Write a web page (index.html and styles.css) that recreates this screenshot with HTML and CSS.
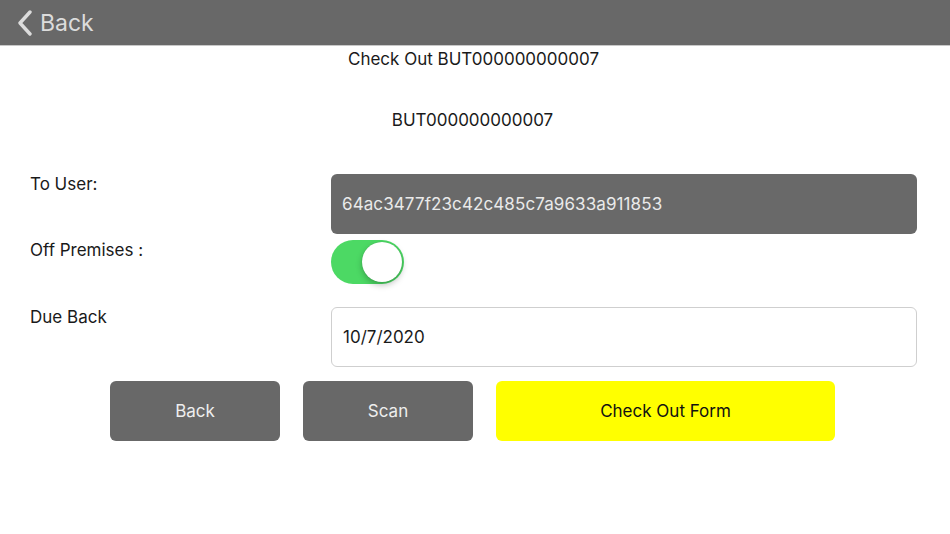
FILE: index.html
```html
<!DOCTYPE html>
<html lang="en">
<head>
    <meta charset="UTF-8">
    <meta name="viewport" content="width=device-width, initial-scale=1.0">
    <title>Check Out</title>
    <link rel="stylesheet" href="styles.css">
</head>
<body>
    <div class="navbar">
        <a class="nav-back" href="#">
            <svg class="chevron" width="16" height="26" viewBox="0 0 16 26">
                <path d="M13 2 L3 13 L13 24" fill="none" stroke="#dcdcdc" stroke-width="3.4" stroke-linecap="round" stroke-linejoin="round"/>
            </svg>
            <span>Back</span>
        </a>
    </div>
    <h2 class="title">Check Out BUT000000000007</h2>
    <div class="asset-id">BUT000000000007</div>
    <div class="form">
        <label class="label">To User:</label>
        <div class="field field-dark">64ac3477f23c42c485c7a9633a911853</div>
        <label class="label label-toggle">Off Premises :</label>
        <div class="toggle-row">
            <span class="toggle"><span class="knob"></span></span>
        </div>
        <label class="label">Due Back</label>
        <div class="field field-light">10/7/2020</div>
    </div>
    <div class="buttons">
        <button class="btn btn-gray">Back</button>
        <button class="btn btn-gray">Scan</button>
        <button class="btn btn-yellow">Check Out Form</button>
    </div>
</body>
</html>
```

FILE: styles.css
```css
* { box-sizing: border-box; margin: 0; padding: 0; font-family: Inter, "Liberation Sans", Arial, sans-serif; }
body { background: #fff; color: #1a1a1a; width: 950px; height: 534px; overflow: hidden; }

.navbar {
    height: 46px; background: #686868; border-bottom: 1px solid #c8c8c8;
    display: flex; align-items: center; padding-left: 17px;
}
.nav-back { display: flex; align-items: center; gap: 7px; text-decoration: none; color: #dcdcdc; font-size: 23px; }
.chevron { display: block; margin-top: 1px; }

.title { font-size: 17px; font-weight: normal; text-align: center; line-height: 20px; margin-top: 3px; padding-right: 3px; }
.asset-id { font-size: 17px; text-align: center; line-height: 20px; margin-top: 41px; padding-right: 5px; }

.form {
    display: grid; grid-template-columns: 301px 586px;
    margin: 44px 0 0 30px;
}
.label { font-size: 17px; line-height: 20px; color: #1a1a1a; }
.label-toggle { padding-top: 6px; }
.field {
    height: 60px; border-radius: 6px; display: flex; align-items: center;
    padding-left: 11px; font-size: 17px;
}
.field-dark { background: #696969; color: #eaeaea; letter-spacing: 0.1px; }
.field-light { background: #fff; border: 1px solid #cfcfcf; color: #1a1a1a; }

.toggle-row { padding: 6px 0 23px; }
.toggle {
    display: block; position: relative; width: 73px; height: 44px;
    border-radius: 22px; background: #4cd964;
}
.knob {
    position: absolute; top: 2px; right: 2px; width: 40px; height: 40px;
    border-radius: 50%; background: #fff;
    box-shadow: 0 3px 6px rgba(0,0,0,0.25), 0 0 1px rgba(0,0,0,0.2);
}

.buttons { display: flex; gap: 23px; margin: 14px 0 0 110px; }
.btn {
    height: 60px; border: none; border-radius: 6px; font-size: 17px;
    cursor: pointer;
}
.btn-gray { width: 170px; background: #686868; color: #eeeeee; }
.btn-yellow { width: 339px; background: #ffff00; color: #111; }
```
